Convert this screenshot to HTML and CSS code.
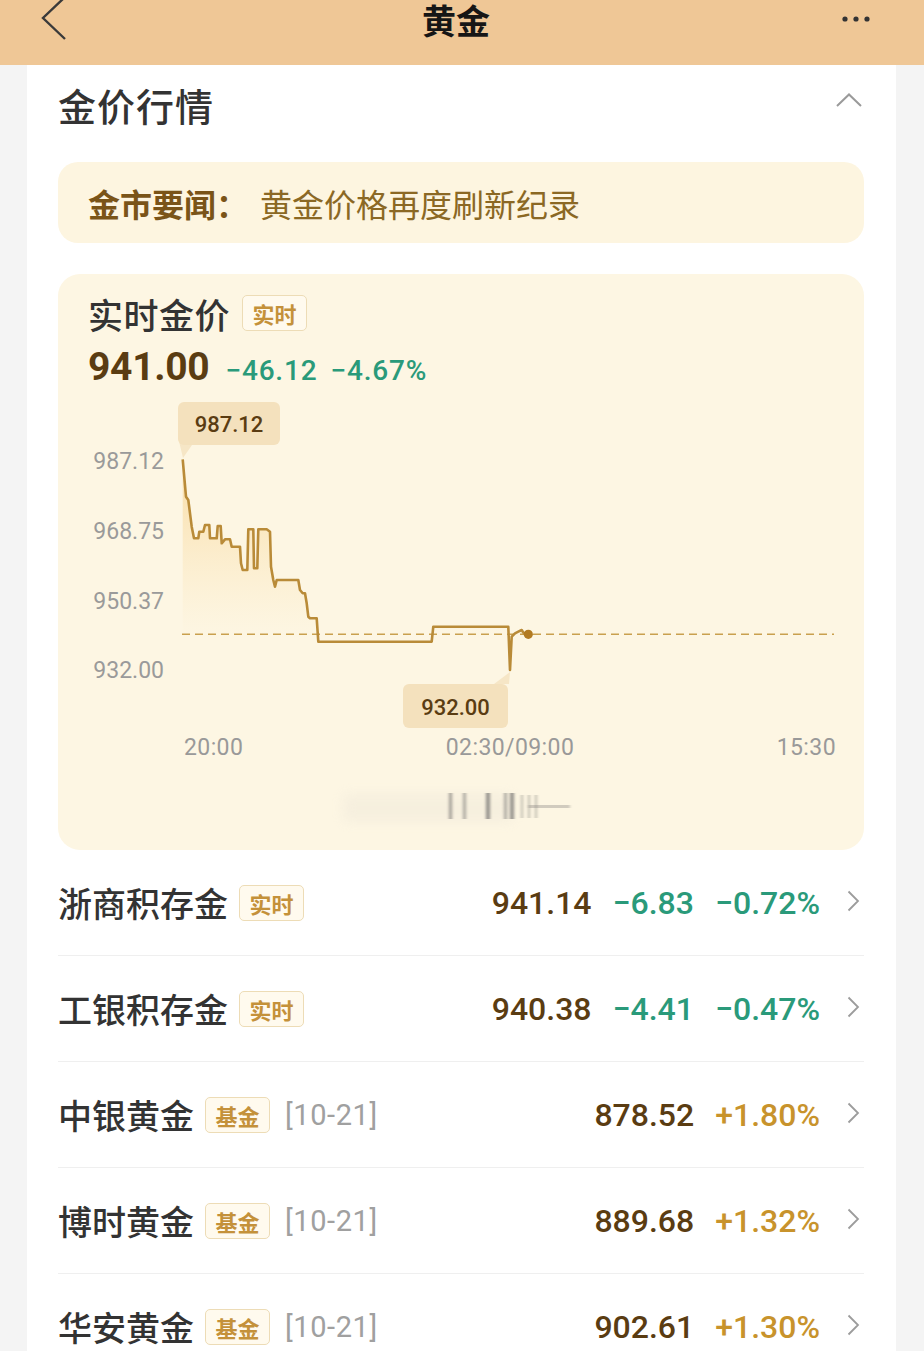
FILE: index.html
```html
<!DOCTYPE html>
<html lang="zh-CN">
<head>
<meta charset="utf-8">
<title>黄金</title>
<link rel="stylesheet" href="styles.css">
</head>
<body>
<header class="topbar">
  <svg class="back" width="28" height="42" viewBox="0 0 28 42"><path d="M25 -1 L3 20 L25 41" fill="none" stroke="#3a3a3a" stroke-width="2.4" stroke-linejoin="miter"/></svg>
  <h1 class="title">黄金</h1>
  <svg class="more" width="30" height="8" viewBox="0 0 30 8"><circle cx="3" cy="4" r="2.6" fill="#333"/><circle cx="14" cy="4" r="2.6" fill="#333"/><circle cx="25" cy="4" r="2.6" fill="#333"/></svg>
</header>

<main class="sheet">
  <div class="sec-head">
    <h2>金价行情</h2>
    <svg class="fold" width="26" height="14" viewBox="0 0 26 14"><path d="M1 13 L13 1.5 L25 13" fill="none" stroke="#9a9a9a" stroke-width="2"/></svg>
  </div>

  <div class="news"><b>金市要闻：</b><span>黄金价格再度刷新纪录</span></div>

  <section class="quote">
    <div class="q-title">实时金价<span class="badge">实时</span></div>
    <div class="q-price"><span class="big">941.00</span><span class="down d1">−46.12</span><span class="down d2">−4.67%</span></div>
    <svg class="chart" width="806" height="461" viewBox="0 0 806 461">
      <defs>
        <linearGradient id="fill" gradientUnits="userSpaceOnUse" x1="0" y1="70" x2="0" y2="250">
          <stop offset="0" stop-color="#f6c66e" stop-opacity="0.55"/>
          <stop offset="1" stop-color="#f8dca4" stop-opacity="0"/>
        </linearGradient>
        <filter id="blur" x="-20%" y="-50%" width="140%" height="200%"><feGaussianBlur stdDeviation="1.6 0.6"/></filter>
        <filter id="blur2" x="-20%" y="-50%" width="140%" height="200%"><feGaussianBlur stdDeviation="6"/></filter>
      </defs>
      <g class="ylab">
        <text x="106" y="80">987.12</text>
        <text x="106" y="150">968.75</text>
        <text x="106" y="220">950.37</text>
        <text x="106" y="289">932.00</text>
      </g>
      <path d="M124.7,70.3 L128,107.7 L130.3,111 L133.7,137.7 L136,149.3 L140.3,149.3 L141.3,142.7 L145.3,142.7 L147,136 L151.3,136 L152,149.3 L158.7,149.3 L159.7,137 L162.7,137 L163.7,154.3 L167,150.3 L172,150.3 L173.7,157.7 L182,157.7 L183,174.3 L184.7,181 L189.3,181 L190.3,140.3 L195.3,140.3 L196,179.3 L199.3,179.3 L200.3,140.3 L208.7,140.3 L212,142.7 L213,177.7 L215.3,191 L217,197.7 L218.7,191 L240.3,191 L242,201 L244.7,204.3 L247,204.3 L248.7,214.3 L250.3,227.7 L252,229.3 L258.7,229.3 L260.3,252.7 L373.7,252.7 L375.3,237.7 L450.3,237.7 L452,281 L453.7,247.7 L457,244.3 L460.3,242.7 L463.7,241 L465.3,243.7 L470.3,245.3 L470.3,300 L124.7,300 Z" fill="url(#fill)"/>
      <line x1="124" y1="245.3" x2="776" y2="245.3" stroke="#c9a04e" stroke-width="1.4" stroke-dasharray="8 5"/>
      <path d="M124.7,70.3 L128,107.7 L130.3,111 L133.7,137.7 L136,149.3 L140.3,149.3 L141.3,142.7 L145.3,142.7 L147,136 L151.3,136 L152,149.3 L158.7,149.3 L159.7,137 L162.7,137 L163.7,154.3 L167,150.3 L172,150.3 L173.7,157.7 L182,157.7 L183,174.3 L184.7,181 L189.3,181 L190.3,140.3 L195.3,140.3 L196,179.3 L199.3,179.3 L200.3,140.3 L208.7,140.3 L212,142.7 L213,177.7 L215.3,191 L217,197.7 L218.7,191 L240.3,191 L242,201 L244.7,204.3 L247,204.3 L248.7,214.3 L250.3,227.7 L252,229.3 L258.7,229.3 L260.3,252.7 L373.7,252.7 L375.3,237.7 L450.3,237.7 L452,281 L453.7,247.7 L457,244.3 L460.3,242.7 L463.7,241 L465.3,243.7 L470.3,245.3" fill="none" stroke="#b98b38" stroke-width="2.6" stroke-linejoin="round"/>
      <circle cx="470.3" cy="245.3" r="4.6" fill="#b27b22"/>
      <polygon points="120,48 134,56 125,69" fill="#f6e6c6"/>
      <rect x="120" y="13" width="102" height="43" rx="6" fill="#f4e1bd"/>
      <text class="tip" x="171" y="43">987.12</text>
      <polygon points="436,295 451,295 452,283" fill="#f6e6c6"/>
      <rect x="345" y="295" width="105" height="44" rx="6" fill="#f4e1bd"/>
      <text class="tip" x="397.5" y="326">932.00</text>
      <g class="xlab">
        <text x="126" y="366">20:00</text>
        <text x="452" y="366" text-anchor="middle">02:30/09:00</text>
        <text x="778" y="366" text-anchor="end">15:30</text>
      </g>
      <g class="smear">
        <rect x="285" y="405" width="170" height="28" fill="#e9e3d6" opacity="0.35" filter="url(#blur2)"/>
        <g filter="url(#blur)" fill="#7d7b78">
          <rect x="391" y="404" width="3" height="26" opacity="0.7"/>
          <rect x="405" y="404" width="3" height="26" opacity="0.6"/>
          <rect x="428" y="404" width="4" height="26" opacity="0.8"/>
          <rect x="446" y="404" width="3" height="26" opacity="0.6"/>
          <rect x="452" y="404" width="4" height="26" opacity="0.8"/>
          <rect x="463" y="406" width="2" height="23" opacity="0.5"/>
          <rect x="470" y="406" width="2" height="23" opacity="0.5"/>
          <rect x="477" y="406" width="2" height="23" opacity="0.5"/>
          <rect x="470" y="416" width="42" height="3" opacity="0.35"/>
        </g>
      </g>
    </svg>
  </section>

  <ul class="list">
    <li class="row">
      <span class="name">浙商积存金</span><span class="badge">实时</span>
      <span class="vals"><span class="price">941.14</span><span class="chg down">−6.83</span><span class="chg down">−0.72%</span></span>
      <svg class="arrow" width="13" height="22" viewBox="0 0 13 22"><path d="M1.5 1.5 L11 11 L1.5 20.5" fill="none" stroke="#9c9c9c" stroke-width="1.8"/></svg>
    </li>
    <li class="row">
      <span class="name">工银积存金</span><span class="badge">实时</span>
      <span class="vals"><span class="price">940.38</span><span class="chg down">−4.41</span><span class="chg down">−0.47%</span></span>
      <svg class="arrow" width="13" height="22" viewBox="0 0 13 22"><path d="M1.5 1.5 L11 11 L1.5 20.5" fill="none" stroke="#9c9c9c" stroke-width="1.8"/></svg>
    </li>
    <li class="row">
      <span class="name">中银黄金</span><span class="badge">基金</span><span class="date">[10-21]</span>
      <span class="vals"><span class="price">878.52</span><span class="chg up">+1.80%</span></span>
      <svg class="arrow" width="13" height="22" viewBox="0 0 13 22"><path d="M1.5 1.5 L11 11 L1.5 20.5" fill="none" stroke="#9c9c9c" stroke-width="1.8"/></svg>
    </li>
    <li class="row">
      <span class="name">博时黄金</span><span class="badge">基金</span><span class="date">[10-21]</span>
      <span class="vals"><span class="price">889.68</span><span class="chg up">+1.32%</span></span>
      <svg class="arrow" width="13" height="22" viewBox="0 0 13 22"><path d="M1.5 1.5 L11 11 L1.5 20.5" fill="none" stroke="#9c9c9c" stroke-width="1.8"/></svg>
    </li>
    <li class="row">
      <span class="name">华安黄金</span><span class="badge">基金</span><span class="date">[10-21]</span>
      <span class="vals"><span class="price">902.61</span><span class="chg up">+1.30%</span></span>
      <svg class="arrow" width="13" height="22" viewBox="0 0 13 22"><path d="M1.5 1.5 L11 11 L1.5 20.5" fill="none" stroke="#9c9c9c" stroke-width="1.8"/></svg>
    </li>
  </ul>
</main>
</body>
</html>
```

FILE: styles.css
```css
* { box-sizing: border-box; }
html, body { margin: 0; padding: 0; }
body {
  background: #f4f4f4;
  font-family: "Noto Sans CJK SC", "Noto Sans", sans-serif;
  color: #333;
  width: 924px;
  overflow: hidden;
}

.topbar {
  height: 65px;
  background: #efc796;
  display: grid;
  grid-template-columns: 1fr auto 1fr;
  align-items: start;
  padding: 0 52px 0 40px;
}
.back { display: block; margin-top: -2px; }
.title {
  margin: 0;
  font-size: 34px;
  font-weight: 700;
  line-height: 40px;
  color: #161616;
}
.more { justify-self: end; margin-top: 15px; }

.sheet {
  margin: 0 28px 0 27px;
  background: #fff;
  padding: 0 32px 0 31px;
  min-height: 1290px;
}

.sec-head {
  height: 80px;
  display: flex;
  justify-content: space-between;
  align-items: flex-start;
}
.sec-head h2 {
  margin: 0;
  font-size: 38px;
  font-weight: 500;
  line-height: 80px;
  letter-spacing: 1px;
  color: #333;
}
.fold { margin: 28px 2px 0 0; }

.news {
  margin-top: 17px;
  height: 81px;
  border-radius: 20px;
  background: #fdf5e0;
  display: flex;
  align-items: center;
  padding-left: 30px;
  font-size: 32px;
}
.news b { color: #7a5418; font-weight: 700; }
.news span { color: #8b6824; margin-left: 12px; }

.quote {
  margin-top: 31px;
  background: #fdf6e3;
  border-radius: 22px;
  padding-top: 19px;
}
.q-title {
  display: flex;
  align-items: center;
  gap: 12px;
  padding-left: 30px;
  height: 40px;
  font-size: 35px;
  font-weight: 500;
  letter-spacing: 0.5px;
  color: #333;
}
.badge {
  display: inline-flex;
  align-items: center;
  justify-content: center;
  width: 65px;
  height: 36px;
  border: 1px solid #eddcb6;
  border-radius: 5px;
  background: #fffaee;
  font-size: 22px;
  font-weight: 700;
  letter-spacing: 0;
  color: #c4913a;
}
.q-price {
  margin-top: 12px;
  height: 44px;
  padding-left: 30px;
  display: flex;
  align-items: baseline;
  font-family: Roboto, "Noto Sans", sans-serif;
}
.q-price .big {
  font-size: 39px;
  font-weight: 700;
  color: #5a3c12;
  letter-spacing: -0.3px;
  line-height: 44px;
}
.q-price .down {
  font-size: 28px;
  font-weight: 500;
  color: #2a9a7a;
  letter-spacing: 0.8px;
}
.q-price .d1 { margin-left: 16px; }
.q-price .d2 { margin-left: 13px; }

.chart { display: block; }
.chart text { font-family: Roboto, "Noto Sans", sans-serif; }
.ylab text { font-size: 23px; fill: #9a9a9a; text-anchor: end; }
.xlab text { font-size: 23px; fill: #999; letter-spacing: 0.4px; }
.tip { font-size: 22px; fill: #5a3c12; text-anchor: middle; font-weight: 500; }

.list { list-style: none; margin: 0; padding: 0; }
.row {
  height: 106px;
  border-bottom: 1px solid #efefef;
  display: flex;
  align-items: center;
}
.name {
  font-size: 34px;
  font-weight: 500;
  color: #333;
}
.row .badge { margin-left: 11px; }
.date {
  margin-left: 15px;
  font-family: Roboto, "Noto Sans", sans-serif;
  font-size: 29px;
  color: #a0a0a0;
  letter-spacing: 0.6px;
}
.vals {
  margin-left: auto;
  display: flex;
  align-items: baseline;
  gap: 21px;
  font-family: Roboto, "Noto Sans", sans-serif;
  font-size: 32px;
  font-weight: 500;
}
.price { color: #5a3c12; }
.chg.down { color: #2a9a7a; }
.chg.up { color: #c8932c; }
.arrow { margin: 0 4px 4px 27px; }
```
